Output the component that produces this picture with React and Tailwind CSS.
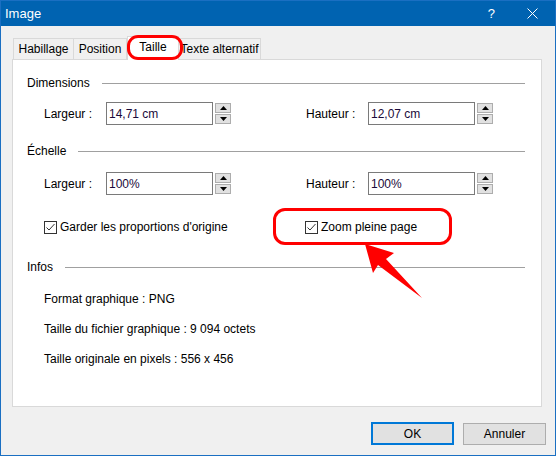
import React from "react";

const font = { fontFamily: '"Liberation Sans", Arial, sans-serif' };

function Spinner() {
  return (
    <div className="flex flex-col gap-px ml-[2px]">
      <div className="w-[16px] h-[10px] bg-[#e1e1e1] border border-[#adadad] flex items-center justify-center">
        <svg width="7" height="4" viewBox="0 0 7 4"><path d="M0 4 L3.5 0 L7 4 Z" fill="#000" /></svg>
      </div>
      <div className="w-[16px] h-[10px] bg-[#e1e1e1] border border-[#adadad] flex items-center justify-center">
        <svg width="7" height="4" viewBox="0 0 7 4"><path d="M0 0 L3.5 4 L7 0 Z" fill="#000" /></svg>
      </div>
    </div>
  );
}

function Field({ label, value, labelW }) {
  return (
    <div className="flex items-center">
      <span className={labelW}>{label}</span>
      <div className="w-[107px] h-[23px] border border-[#7a7a7a] bg-white flex items-center pl-[2px] text-[#1a0a3a]">
        {value}
      </div>
      <Spinner />
    </div>
  );
}

function Section({ title }) {
  return (
    <div className="flex items-center gap-[12px] pr-[2px]">
      <span>{title}</span>
      <div className="flex-1 border-t border-[#a0a0a0]" />
    </div>
  );
}

function Check({ label }) {
  return (
    <div className="flex items-center gap-[3px]">
      <div className="w-[13px] h-[13px] border border-[#333] bg-white flex items-center justify-center">
        <svg width="11" height="11" viewBox="0 0 11 11">
          <path d="M1.5 5.5 L4 8 L9.5 2" fill="none" stroke="#333" strokeWidth="1" />
        </svg>
      </div>
      <span>{label}</span>
    </div>
  );
}

const tabs = [
  { name: "Habillage", w: "w-[61px]" },
  { name: "Position", w: "w-[54px]" },
  { name: "Taille", w: "w-[52px]", active: true },
  { name: "Texte alternatif", w: "w-[83px]" },
];

export default function App() {
  return (
    <div
      className="relative w-[556px] h-[456px] bg-[#f0f0f0] border border-[#1a6fc2] flex flex-col text-[12px] leading-[16px] text-black overflow-hidden"
      style={font}
    >
      {/* title bar */}
      <div className="h-[25px] bg-[#0063b1] flex items-center text-white pl-[4px] shrink-0">
        <span className="text-[13px]">Image</span>
        <span className="ml-auto mr-[32px] text-[13px]">?</span>
        <svg width="11" height="11" viewBox="0 0 11 11" className="mr-[17px]">
          <path d="M0.5 0.5 L10.5 10.5 M10.5 0.5 L0.5 10.5" stroke="#fff" strokeWidth="1" />
        </svg>
      </div>

      {/* tabs */}
      <div className="flex items-end pl-[12px] pt-[10px] h-[33px] shrink-0 relative z-10 whitespace-nowrap">
        {tabs.map((t) =>
          t.active ? (
            <div
              key={t.name}
              className={`${t.w} h-[24px] -mb-px bg-white border border-b-0 border-[#d9d9d9] flex items-start justify-center pt-[2px]`}
            >
              {t.name}
            </div>
          ) : (
            <div
              key={t.name}
              className={`${t.w} h-[21px] bg-[#f0f0f0] border border-b-0 border-[#d9d9d9] -ml-px first:ml-0 flex items-center justify-center`}
            >
              {t.name}
            </div>
          )
        )}
      </div>

      {/* panel */}
      <div className="ml-[11px] w-[530px] h-[348px] bg-white border border-[#d9d9d9] pl-[14px] pr-[14px] pt-[15px] flex flex-col shrink-0">
        <Section title="Dimensions" />
        <div className="flex items-center mt-[11px] pl-[17px]">
          <Field label="Largeur :" value="14,71 cm" labelW="w-[62px]" />
          <div className="ml-[75px]">
            <Field label="Hauteur :" value="12,07 cm" labelW="w-[62px]" />
          </div>
        </div>

        <div className="mt-[18px]">
          <Section title="Échelle" />
        </div>
        <div className="flex items-center mt-[13px] pl-[17px]">
          <Field label="Largeur :" value="100%" labelW="w-[62px]" />
          <div className="ml-[75px]">
            <Field label="Hauteur :" value="100%" labelW="w-[62px]" />
          </div>
        </div>

        <div className="flex items-center mt-[24px] pl-[17px]">
          <div className="w-[261px]">
            <Check label="Garder les proportions d'origine" />
          </div>
          <Check label="Zoom pleine page" />
        </div>

        <div className="mt-[24px]">
          <Section title="Infos" />
        </div>
        <div className="pl-[17px] flex flex-col gap-[14px] mt-[16px]">
          <span>Format graphique : PNG</span>
          <span>Taille du fichier graphique : 9 094 octets</span>
          <span>Taille originale en pixels : 556 x 456</span>
        </div>
      </div>

      {/* buttons */}
      <div className="flex justify-end gap-[9px] pr-[9px] mt-[15px]">
        <button className="w-[83px] h-[23px] bg-[#e1e1e1] border-2 border-[#0078d7] flex items-center justify-center">
          OK
        </button>
        <button className="w-[83px] h-[22px] bg-[#e1e1e1] border border-[#adadad] flex items-center justify-center mt-px">
          Annuler
        </button>
      </div>

      {/* annotations */}
      <div className="absolute left-[126px] top-[34px] w-[56px] h-[25px] border-[3px] border-[#ff0000] rounded-[11px] z-20" />
      <div className="absolute left-[272px] top-[207px] w-[179px] h-[37px] border-[3px] border-[#ff0000] rounded-[12px] z-20" />
      <svg className="absolute left-0 top-0 z-20" width="556" height="456" viewBox="0 0 556 456">
        <polygon
          points="364,243 393,252 385,258 421,297 377,264 372,272"
          fill="#ff0000"
        />
      </svg>
    </div>
  );
}
